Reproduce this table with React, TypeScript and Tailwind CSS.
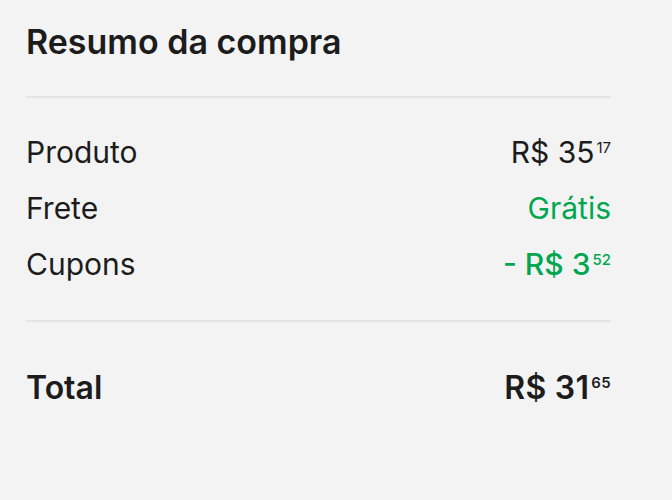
const font = { fontFamily: '"Inter", "Open Sans", sans-serif' };

function Price({ int, cents, className }: { int: string; cents: string; className: string }) {
  return (
    <span className={`inline-flex items-start ${className}`}>
      <span>{int}</span>
      <span className="ml-[2px] mt-[3px] text-[15px] leading-none">{cents}</span>
    </span>
  );
}

function Row({ label, children }: { label: string; children: React.ReactNode }) {
  return (
    <div className="flex h-[56px] items-center justify-between">
      <span>{label}</span>
      {children}
    </div>
  );
}

export default function App() {
  return (
    <div className="h-[500px] w-[672px] bg-[#f3f3f3] text-[#1c1c1c]" style={font}>
      <div className="w-[611px] pl-[26px]">
        <h2 className="pt-[22px] text-[34px] font-semibold leading-[40px]">Resumo da compra</h2>
        <div className="mt-[34px] h-[2px] bg-[#e4e4e4]" />

        <div className="pt-[26px] pb-[28px] text-[30px] leading-none">
          <Row label="Produto">
            <Price int="R$ 35" cents="17" className="text-[#1c1c1c]" />
          </Row>
          <Row label="Frete">
            <span className="text-[#00a650]">Grátis</span>
          </Row>
          <Row label="Cupons">
            <Price int="- R$ 3" cents="52" className="font-medium text-[#00a650]" />
          </Row>
        </div>

        <div className="h-[2px] bg-[#e4e4e4]" />

        <div className="mt-[50px] flex items-center justify-between text-[32px] font-semibold leading-none">
          <span>Total</span>
          <Price int="R$ 31" cents="65" className="tracking-[0.3px]" />
        </div>
      </div>
    </div>
  );
}
